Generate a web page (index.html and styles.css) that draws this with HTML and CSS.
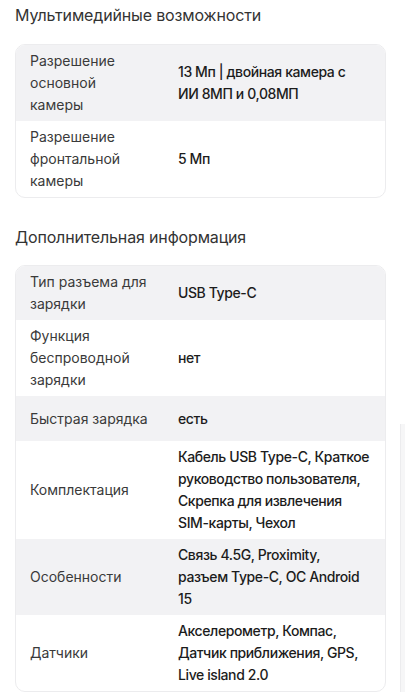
FILE: index.html
```html
<!DOCTYPE html>
<html lang="ru">
<head>
<meta charset="utf-8">
<link rel="stylesheet" href="styles.css">
</head>
<body>
<div class="page">
  <section class="section">
    <h2 class="title">Мультимедийные возможности</h2>
    <div class="card">
      <div class="row"><div class="label">Разрешение основной камеры</div><div class="value">13 Мп | двойная камера с ИИ&nbsp;8МП и 0,08МП</div></div>
      <div class="row"><div class="label">Разрешение фронтальной камеры</div><div class="value">5 Мп</div></div>
    </div>
  </section>
  <section class="section">
    <h2 class="title">Дополнительная информация</h2>
    <div class="card">
      <div class="row"><div class="label">Тип разъема для зарядки</div><div class="value">USB Type-C</div></div>
      <div class="row"><div class="label">Функция беспроводной зарядки</div><div class="value">нет</div></div>
      <div class="row"><div class="label">Быстрая зарядка</div><div class="value">есть</div></div>
      <div class="row"><div class="label">Комплектация</div><div class="value">Кабель USB Type-C, Краткое руководство пользователя, Скрепка для извлечения SIM-карты, Чехол</div></div>
      <div class="row"><div class="label">Особенности</div><div class="value">Связь 4.5G, Proximity, разъем Type-C, ОС Android 15</div></div>
      <div class="row"><div class="label">Датчики</div><div class="value">Акселерометр, Компас, Датчик приближения, GPS, Live island 2.0</div></div>
    </div>
  </section>
</div>
<div class="side-peek"></div>
</body>
</html>
```

FILE: styles.css
```css
html, body {
  margin: 0;
  padding: 0;
  background: #ffffff;
}
body {
  font-family: Inter, "Noto Sans", sans-serif;
  color: #2b2b2b;
  overflow: hidden;
}
.page {
  padding: 3px 19px 0 15px;
}
.section + .section {
  margin-top: 27px;
}
.title {
  margin: 0 0 17px 0;
  font-size: 16px;
  line-height: 24px;
  font-weight: 400;
  color: #333333;
  letter-spacing: -0.15px;
}
.section + .section .title {
  margin-bottom: 16px;
}
.card {
  border: 1px solid #ececee;
  border-radius: 10px;
  overflow: hidden;
}
.row {
  display: grid;
  grid-template-columns: 119px 1fr;
  column-gap: 29px;
  align-items: center;
  padding: 5px 14px 5px 14px;
  min-height: 35px;
  font-size: 14px;
  line-height: 22px;
}
.row:nth-child(odd) {
  background: #f2f2f4;
}
.label {
  color: #3a3a3a;
  font-weight: 400;
}
.value {
  color: #1c1c1c;
  font-weight: 500;
  letter-spacing: -0.4px;
}
.side-peek {
  position: absolute;
  left: 400px;
  top: 424px;
  width: 10px;
  height: 268px;
  background: #f6f6f7;
  border-left: 1px solid #ececee;
}
```
